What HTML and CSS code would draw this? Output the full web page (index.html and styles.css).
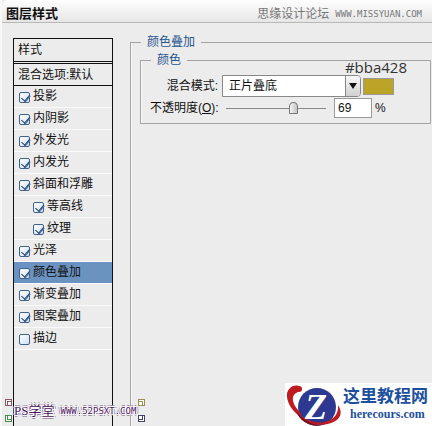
FILE: index.html
```html
<!DOCTYPE html>
<html lang="zh-CN">
<head>
    <meta charset="UTF-8">
    <meta name="viewport" content="width=device-width, initial-scale=1.0">
    <title>图层样式</title>
    <link rel="stylesheet" href="styles.css">
</head>
<body>
    <header class="title-bar">
        <h1>图层样式</h1>
        <div class="forum">思缘设计论坛 <span class="pixel-text">WWW.MISSYUAN.COM</span></div>
    </header>

    <main class="dialog">
        <!-- Style list -->
        <aside class="style-list">
            <h2>样式</h2>
            <div class="blend-row">混合选项:默认</div>
            <label class="style-item"><input type="checkbox" checked>投影</label>
            <label class="style-item"><input type="checkbox" checked>内阴影</label>
            <label class="style-item"><input type="checkbox" checked>外发光</label>
            <label class="style-item"><input type="checkbox" checked>内发光</label>
            <label class="style-item"><input type="checkbox" checked>斜面和浮雕</label>
            <label class="style-item sub"><input type="checkbox" checked>等高线</label>
            <label class="style-item sub"><input type="checkbox" checked>纹理</label>
            <label class="style-item"><input type="checkbox" checked>光泽</label>
            <label class="style-item active"><input type="checkbox" checked>颜色叠加</label>
            <label class="style-item"><input type="checkbox" checked>渐变叠加</label>
            <label class="style-item"><input type="checkbox" checked>图案叠加</label>
            <label class="style-item"><input type="checkbox">描边</label>
        </aside>

        <!-- Color overlay settings -->
        <fieldset class="panel">
            <legend>颜色叠加</legend>
            <fieldset class="group">
                <legend>颜色</legend>
                <div class="field-row">
                    <label class="field-label" for="blendMode">混合模式:</label>
                    <div class="select-box">
                        <select id="blendMode">
                            <option>正片叠底</option>
                        </select>
                        <span class="select-arrow"></span>
                    </div>
                    <div class="swatch-box">
                        <button type="button" class="swatch" aria-label="叠加颜色"></button>
                        <span class="hex">#bba428</span>
                    </div>
                </div>
                <div class="field-row">
                    <label class="field-label" for="opacity">不透明度(<u>O</u>):</label>
                    <input class="slider" type="range" min="0" max="100" value="69" aria-label="不透明度">
                    <input class="number" id="opacity" type="text" value="69">
                    <span>%</span>
                </div>
            </fieldset>
        </fieldset>
    </main>

    <div class="watermark">
        <i class="corner tl"></i>
        <i class="corner tr"></i>
        <i class="corner bl"></i>
        <i class="corner br"></i>
        <span class="school">PS学堂</span>
        <span class="pixel-text">WWW.52PSXT.COM</span>
    </div>

    <div class="site-logo">
        <svg width="58" height="43" viewBox="0 0 58 43" aria-hidden="true">
            <circle cx="32" cy="24" r="19" fill="#2d3990"/>
            <path d="M14 3C8 1 1 6 2 14C3 22 8 29 17 35L15 29C7 21 5 12 13 9Z" fill="#bd1b20"/>
            <circle cx="14" cy="6" r="3" fill="#bd1b20"/>
            <path d="M12 29C14 36 22 42 34 42C50 42 61 34 53 22C54 30 49 37 40 39C30 41 20 37 12 29Z" fill="#bd1b20"/>
            <path d="M12 29C14 37 22 43 36 43C28 42 18 37 12 29Z" fill="#7d1015"/>
            <text class="logo-letter" x="31" y="36" text-anchor="middle">Z</text>
        </svg>
        <div class="logo-text">
            <strong>这里教程网</strong>
            <span>herecours.com</span>
        </div>
    </div>
</body>
</html>
```

FILE: styles.css
```css
* {
    box-sizing: border-box;
}
body {
    margin: 0;
    min-height: 100vh;
    display: flex;
    flex-direction: column;
    position: relative;
    overflow: hidden;
    background: #ececec;
    border-left: 2px solid #f8f8f8;
    color: #111;
    font-family: "Liberation Sans", "Noto Sans CJK SC", sans-serif;
    font-size: 12px;
    line-height: 16px;
}
.title-bar {
    display: flex;
    justify-content: space-between;
    align-items: center;
    height: 23px;
    padding: 6px 10px 0 4px;
    background: linear-gradient(#fefefe, #e6e6e6);
    border-bottom: 1px solid #b8b8b8;
    border-top-left-radius: 6px;
}
.title-bar h1 {
    margin: 0;
    font-size: 13px;
}
.forum {
    display: flex;
    align-items: center;
    gap: 6px;
    color: #777;
}
.pixel-text {
    font-family: "DejaVu Sans Mono", monospace;
    font-size: 9px;
}
.dialog {
    flex: 1;
    display: flex;
    gap: 17px;
    padding-left: 11px;
}

/* Style list */
.style-list {
    flex: none;
    width: 100px;
    margin-top: 15px;
    border: 1px solid #111;
    border-bottom: 0;
}
.style-list h2 {
    height: 25px;
    margin: 0;
    padding: 3px 4px;
    border-bottom: 3px double #111;
    font-size: 12px;
    font-weight: normal;
}
.blend-row {
    height: 22px;
    padding: 3px 4px;
    border-bottom: 1px solid #111;
}
.style-item {
    display: flex;
    align-items: center;
    gap: 3px;
    height: 22px;
    padding: 0 5px 2px;
    border-bottom: 1px solid #fbfbfb;
}
.style-item.sub {
    padding-left: 19px;
}
.style-item.active {
    background: #6b93c1;
}
.style-item input {
    appearance: none;
    flex: none;
    width: 11px;
    height: 11px;
    margin: 3px 0 0;
    position: relative;
    border: 1px solid #3f628c;
    border-radius: 2px;
    background: linear-gradient(135deg, #fff, #cfe0f3);
}
.style-item input:checked::after {
    content: "";
    position: absolute;
    left: 3px;
    top: 0;
    width: 4px;
    height: 7px;
    border: solid #1f426e;
    border-width: 0 1px 1px 0;
    box-shadow: 1px 0 #56789f;
    transform: rotate(40deg);
}

/* Settings panel */
fieldset {
    min-width: 0;
    margin: 0;
    border: 1px solid #a3a3a3;
    box-shadow: inset 1px 0 #f8f8f8;
}
legend {
    padding: 0 6px;
    color: #25568e;
}
.panel {
    flex: 1;
    margin-top: 11px;
    padding: 2px 1px 0 9px;
    border-right: 0;
    border-bottom: 0;
}
.panel > legend {
    margin-left: 1px;
}
.group {
    padding: 7px 0 5px 9px;
}
.group > legend {
    margin-left: 1px;
}
.field-row {
    display: flex;
    align-items: center;
}
.field-row + .field-row {
    margin-top: 1px;
}
.field-label {
    width: 68px;
    text-align: right;
    white-space: nowrap;
}
.select-box {
    position: relative;
    width: 139px;
    height: 22px;
    margin-left: 4px;
}
.select-box select {
    appearance: none;
    width: 100%;
    height: 100%;
    padding: 0 20px 0 6px;
    border: 1px solid #888;
    border-radius: 0 4px 4px 0;
    background: #fff;
    color: #111;
    font: inherit;
}
.select-arrow {
    position: absolute;
    top: 1px;
    right: 1px;
    bottom: 1px;
    width: 15px;
    border-left: 1px solid #888;
    border-radius: 0 3px 3px 0;
    background: linear-gradient(#f8f8f8, #d0d0d0);
    pointer-events: none;
}
.select-arrow::after {
    content: "";
    position: absolute;
    left: 3px;
    top: 7px;
    border: 4px solid transparent;
    border-top: 6px solid #111;
    border-bottom: 0;
}
.swatch-box {
    position: relative;
    margin-left: 2px;
}
.swatch {
    display: block;
    width: 31px;
    height: 17px;
    padding: 0;
    border: 1px solid #999;
    background: #bba428;
}
.hex {
    position: absolute;
    right: -13px;
    bottom: 18px;
    color: #333;
    font-family: "Open Sans", sans-serif;
    font-size: 15px;
    line-height: 20px;
}
.slider {
    appearance: none;
    width: 100px;
    height: 12px;
    margin: 0 8px;
    background: linear-gradient(#888, #888) center / 100% 1px no-repeat;
}
.slider::-webkit-slider-thumb {
    appearance: none;
    width: 9px;
    height: 12px;
    background: linear-gradient(90deg, #f4f4f4, #c4c4c4);
    border: 1px solid #777;
    border-radius: 5px 5px 1px 1px;
}
.number {
    width: 38px;
    height: 20px;
    margin-right: 3px;
    padding: 0 3px;
    border: 1px solid #999;
    background: #fff;
    color: #111;
    font: inherit;
}

/* Watermarks over the dialog */
.watermark {
    position: absolute;
    left: 3px;
    bottom: 4px;
    width: 140px;
    height: 23px;
    display: flex;
    align-items: center;
    gap: 6px;
    padding-left: 9px;
    color: #4a1560;
    text-shadow: 1px 0 #fff, -1px 0 #fff, 0 1px #fff, 0 -1px #fff, 1px 1px #fff, -1px -1px #fff, 2px 0 #9a86a4, -2px 0 #9a86a4, 0 2px #9a86a4, 0 -2px #9a86a4;
}
.school {
    font-family: "Liberation Serif", "Noto Sans CJK SC", serif;
    font-size: 13px;
}
.corner {
    position: absolute;
    width: 7px;
    height: 7px;
    border: 1px solid;
    background: #fff;
}
.corner::after {
    content: "";
    position: absolute;
    right: 0;
    bottom: 0;
    width: 3px;
    height: 3px;
    border: solid;
    border-width: 1px 0 0 1px;
}
.tl {
    left: 0;
    top: 0;
    color: #8a5560;
}
.tr {
    right: 0;
    top: 0;
    color: #9a9050;
    transform: rotate(90deg);
}
.bl {
    left: 0;
    bottom: 0;
    color: #4a8a50;
    transform: rotate(270deg);
}
.br {
    right: 0;
    bottom: 0;
    color: #44446a;
    transform: rotate(180deg);
}
.site-logo {
    position: absolute;
    right: 0;
    bottom: 0;
    display: flex;
    width: 147px;
    height: 43px;
    background: #fff;
}
.logo-letter {
    fill: #fff;
    font: italic bold 36px "Liberation Serif", serif;
}
.logo-text {
    display: flex;
    flex-direction: column;
    color: #1c4f9c;
    white-space: nowrap;
}
.logo-text strong {
    font-family: "Noto Sans CJK SC", sans-serif;
    font-size: 17px;
    line-height: 24px;
}
.logo-text span {
    padding-left: 7px;
    font: bold 12px/14px "Liberation Serif", serif;
}
```
